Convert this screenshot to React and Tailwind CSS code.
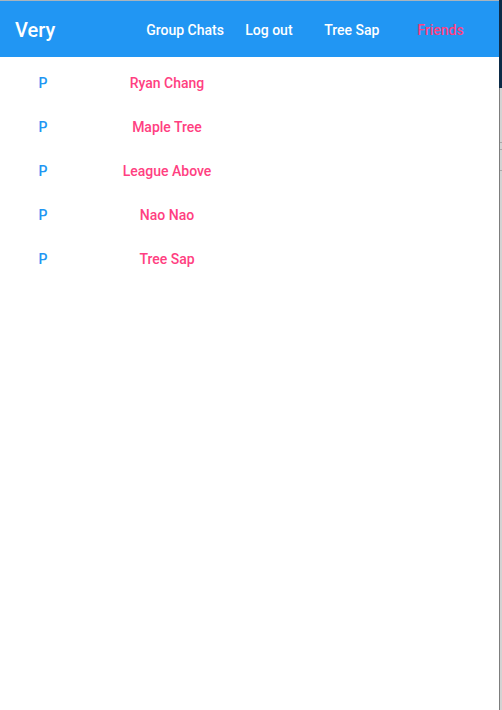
const friends = ['Ryan Chang', 'Maple Tree', 'League Above', 'Nao Nao', 'Tree Sap']

export default function App() {
  return (
    <div className="flex h-[710px] w-[502px] overflow-hidden bg-white font-['Roboto',sans-serif]">
      <div className="flex w-[499px] flex-col">
        {/* header */}
        <div className="h-px bg-[#a9b4bd]" />
        <header className="flex h-[56px] items-center bg-[#2196f3] pt-[2px] text-white">
          <span className="ml-[15px] text-[20px] font-medium">Very</span>
          <nav className="ml-[91px] flex items-center text-[14px] font-medium">
            <a className="w-[99px]">Group Chats</a>
            <a className="w-[79px]">Log out</a>
            <a className="w-[93px]">Tree Sap</a>
            <a className="text-[#ff4081]">Friends</a>
          </nav>
        </header>

        {/* friend list */}
        <div className="flex flex-col pt-[16px]">
          {friends.map((name) => (
            <div key={name} className="flex h-[44px] items-start text-[14px] font-medium">
              <span className="w-[86px] text-center text-[#2196f3]">P</span>
              <span className="w-[162px] text-center text-[#ff4081]">{name}</span>
            </div>
          ))}
        </div>
      </div>

      {/* edge of the next window */}
      <div className="flex w-[3px] flex-col">
        <div className="h-[88px] bg-[#0c2b47]" />
        <div className="flex flex-1">
          <div className="w-px bg-[#7d7d7d]" />
          <div className="flex w-[2px] flex-col bg-[#d3d3d3]">
            <div className="mt-[54px] h-px bg-[#a8a8a8]" />
            <div className="mt-[6px] h-px bg-[#a8a8a8]" />
            <div className="mt-[20px] h-px bg-[#a8a8a8]" />
          </div>
        </div>
      </div>
    </div>
  )
}
